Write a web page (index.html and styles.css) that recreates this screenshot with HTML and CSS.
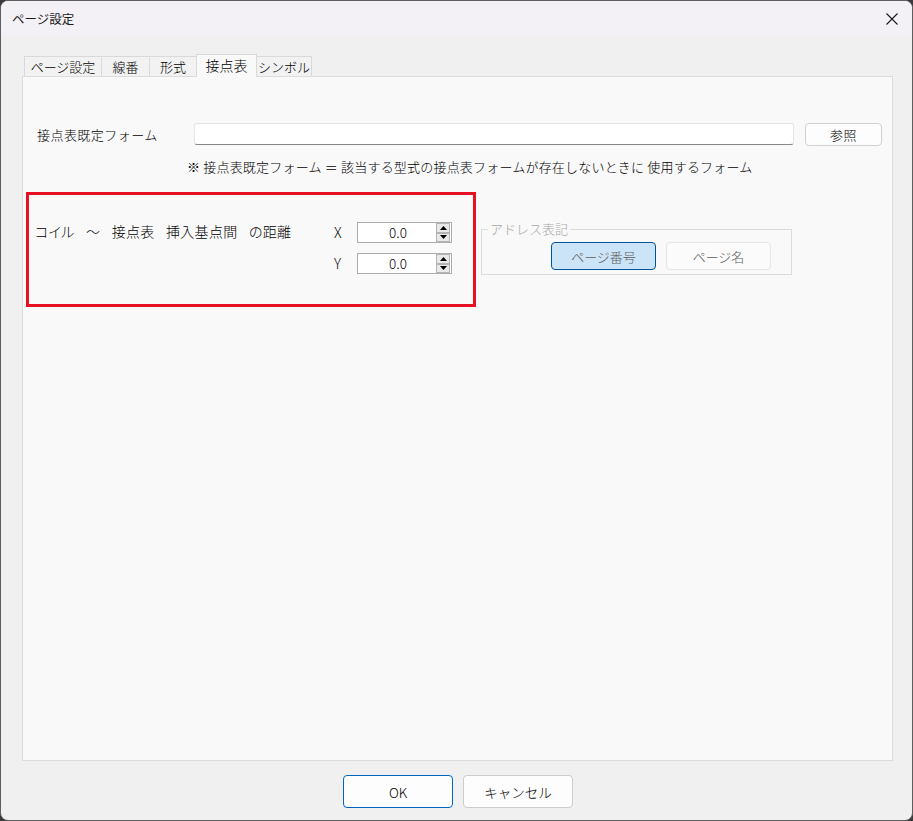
FILE: index.html
```html
<!DOCTYPE html>
<html lang="ja">
<head>
<meta charset="utf-8">
<title>ページ設定</title>
<link rel="stylesheet" href="styles.css">
</head>
<body>
<div class="window">
  <div class="titlebar">
    <span class="title">ページ設定</span>
    <svg class="close" width="12" height="12" viewBox="0 0 12 12"><path d="M0.5 0.5 L11.5 11.5 M11.5 0.5 L0.5 11.5" stroke="#1a1a1a" stroke-width="1.1" fill="none"/></svg>
  </div>
  <div class="tabs">
    <div class="tab t1">ページ設定</div>
    <div class="tab t2">線番</div>
    <div class="tab t3">形式</div>
    <div class="tab t4 active">接点表</div>
    <div class="tab t5">シンボル</div>
  </div>
  <div class="panel">
    <div class="row-form">
      <label class="form-label">接点表既定フォーム</label>
      <div class="textbox"></div>
      <button class="btn browse">参照</button>
    </div>
    <div class="note">※ 接点表既定フォーム ＝ 該当する型式の接点表フォームが存在しないときに 使用するフォーム</div>
    <div class="row-dist">
      <div class="dist-label">コイル ～ 接点表 挿入基点間 の距離</div>
      <div class="spins">
        <div class="spinrow">
          <span class="axis">X</span>
          <div class="spin">
            <span class="val">0.0</span>
            <div class="arrows">
              <div class="arr"><svg width="7" height="4" viewBox="0 0 7 4"><path d="M3.5 0 L7 4 L0 4 Z" fill="#000"/></svg></div>
              <div class="arr"><svg width="7" height="4" viewBox="0 0 7 4"><path d="M0 0 L7 0 L3.5 4 Z" fill="#000"/></svg></div>
            </div>
          </div>
        </div>
        <div class="spinrow">
          <span class="axis">Y</span>
          <div class="spin">
            <span class="val">0.0</span>
            <div class="arrows">
              <div class="arr"><svg width="7" height="4" viewBox="0 0 7 4"><path d="M3.5 0 L7 4 L0 4 Z" fill="#000"/></svg></div>
              <div class="arr"><svg width="7" height="4" viewBox="0 0 7 4"><path d="M0 0 L7 0 L3.5 4 Z" fill="#000"/></svg></div>
            </div>
          </div>
        </div>
      </div>
      <fieldset class="group">
        <legend>アドレス表記</legend>
        <div class="group-buttons">
          <button class="btn toggle selected">ページ番号</button>
          <button class="btn toggle">ページ名</button>
        </div>
      </fieldset>
    </div>
    <div class="highlight"></div>
  </div>
  <div class="footer">
    <button class="btn dlg ok">OK</button>
    <button class="btn dlg">キャンセル</button>
  </div>
</div>
</body>
</html>
```

FILE: styles.css
```css
* { box-sizing: border-box; }
html, body {
  margin: 0;
  width: 913px;
  height: 821px;
  overflow: hidden;
  background: #3a3a3a;
}
body {
  font-family: "Noto Sans CJK JP", sans-serif;
  font-size: 13px;
  font-weight: 300;
  color: #000;
}
.window {
  width: 913px;
  height: 821px;
  border: 1px solid #5e5e5e;
  border-radius: 8px;
  overflow: hidden;
  background: #f0f0f0;
  display: flex;
  flex-direction: column;
}
.titlebar {
  height: 36px;
  flex: none;
  background: #f3f1f6;
  display: flex;
  align-items: center;
  justify-content: space-between;
  padding: 0 14px 0 11px;
}
.title {
  font-size: 12.5px;
  font-weight: 400;
  color: #1b1b1b;
  line-height: 16px;
}
.close { display: block; }

.tabs {
  display: flex;
  align-items: flex-end;
  height: 23px;
  margin: 17px 0 -1px 23px;
  position: relative;
  z-index: 1;
  flex: none;
}
.tab {
  height: 20px;
  margin-bottom: 1px;
  border: 1px solid #d9d9d9;
  border-bottom: none;
  background: #f2f2f2;
  text-align: center;
  line-height: 19px;
  font-size: 13px;
  color: #000;
  margin-left: -1px;
}
.tab.t1 { width: 78px; margin-left: 0; }
.tab.t2 { width: 49px; }
.tab.t3 { width: 48px; }
.tab.t4 { width: 61px; font-size: 14px; }
.tab.t5 { width: 56px; }
.tab.active {
  height: 23px;
  margin-bottom: 0;
  background: #f9f9f9;
  line-height: 20px;
  position: relative;
  z-index: 2;
}

.panel {
  position: relative;
  margin-left: 21px;
  width: 871px;
  height: 685px;
  flex: none;
  background: #f9f9f9;
  border: 1px solid #dcdcdc;
}

.row-form {
  display: flex;
  align-items: center;
  height: 23px;
  margin-top: 46px;
}
.form-label {
  width: 171px;
  padding-left: 14px;
  line-height: 18px;
  letter-spacing: 0.45px;
}
.textbox {
  width: 600px;
  height: 22px;
  background: #fff;
  border: 1px solid #e5e5e5;
  border-bottom-color: #868686;
  border-radius: 3px;
  align-self: flex-start;
}
.btn {
  font-family: inherit;
  font-size: 13px;
  font-weight: 300;
  color: #000;
  padding: 0;
  margin: 0;
  background: #fdfdfd;
  border: 1px solid #d0d0d0;
  border-radius: 4px;
}
.browse {
  width: 77px;
  height: 23px;
  margin-left: 11px;
  line-height: 20px;
  letter-spacing: 0.5px;
}

.note {
  margin-top: 12px;
  margin-left: 164px;
  line-height: 18px;
  height: 18px;
  letter-spacing: 0.2px;
}

.row-dist {
  display: flex;
  align-items: flex-start;
  margin-top: 46px;
}
.dist-label {
  width: 311px;
  padding-left: 12px;
  line-height: 19px;
  font-size: 14px;
  letter-spacing: 0.3px;
  word-spacing: 8px;
  font-feature-settings: "palt" 1;
}
.spins {
  display: flex;
  flex-direction: column;
  gap: 10px;
}
.spinrow {
  display: flex;
  align-items: center;
  height: 21px;
}
.axis {
  width: 23px;
  line-height: 19px;
  font-size: 14px;
}
.spin {
  width: 95px;
  height: 21px;
  border: 1px solid #acacac;
  background: #fff;
  display: flex;
  align-items: stretch;
}
.val {
  flex: 1;
  text-align: center;
  line-height: 19px;
  font-size: 13.5px;
  padding-left: 2px;
}
.arrows {
  display: flex;
  flex-direction: column;
  margin: 0 1px 0 0;
}
.arr {
  width: 14px;
  height: 9.5px;
  border: 1px solid #b4b4b4;
  background: #e9e9e9;
  display: flex;
  align-items: center;
  justify-content: center;
}
.arr svg { display: block; }

.group {
  margin: -1px 0 0 29px;
  padding: 0 0 4px 69px;
  width: 311px;
  border: 1px solid #dcdcdc;
  min-inline-size: 0;
}
.group legend {
  margin-left: -63px;
  padding: 0 2px;
  line-height: 16px;
  font-size: 13px;
  color: #a8a8a8;
}
.group-buttons {
  display: flex;
  gap: 10px;
  margin-top: 5px;
}
.toggle {
  width: 105px;
  height: 28px;
  color: #5e5e5e;
  background: #fbfbfb;
  border-color: #e5e5e5;
}
.toggle.selected {
  background: #cce4f7;
  border-color: #005499;
}

.highlight {
  position: absolute;
  left: 3px;
  top: 115px;
  width: 450px;
  height: 115px;
  border: 3px solid #e81123;
  pointer-events: none;
}

.footer {
  display: flex;
  justify-content: center;
  gap: 10px;
  padding: 14px 0 0 3px;
}
.dlg {
  width: 110px;
  height: 33px;
  line-height: 30px;
  border-color: #cccccc;
  font-size: 13.5px;
}
.dlg.ok {
  border-color: #0067c0;
}
```
